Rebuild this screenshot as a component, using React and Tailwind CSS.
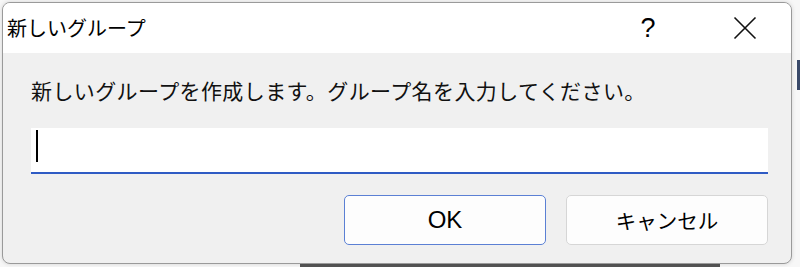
import React from "react";

const jp = { fontFamily: '"Noto Sans CJK JP", "Noto Sans", sans-serif' };
const latin = { fontFamily: '"Liberation Sans", "Noto Sans CJK JP", sans-serif' };

const App = () => {
  return (
    <div className="w-[800px] h-[267px] bg-[#f7f7f7] overflow-hidden relative" style={jp}>
      {/* background window bits peeking out */}
      <div className="absolute right-0 top-[60px] w-[3px] h-[30px] bg-[#3a4a6a]" />
      <div className="absolute left-[300px] bottom-0 w-[420px] h-[3px] bg-[#555]" />

      <div className="ml-[2px] mt-[2px] w-[790px] h-[262px] rounded-[8px] border border-[#9a9a9a] overflow-hidden flex flex-col bg-[#f0f0f0] relative shadow-[0_0_4px_rgba(0,0,0,0.15)]">
        {/* title bar */}
        <div className="h-[50px] bg-white flex items-center shrink-0">
          <span className="pl-[4px] text-[20px] leading-none text-black">新しいグループ</span>
          <div className="ml-auto flex items-center h-full">
            <span className="w-[40px] text-center text-[27px] leading-none text-black mr-[65px]" style={latin}>?</span>
            <svg width="24" height="24" viewBox="0 0 24 24" className="mr-[34px]">
              <path d="M1.5 1.5 L22.5 22.5 M22.5 1.5 L1.5 22.5" stroke="#111" strokeWidth="1.6" fill="none" />
            </svg>
          </div>
        </div>

        {/* body */}
        <div className="flex-1 flex flex-col pl-[28px] pr-[23px]">
          <p className="mt-[23px] text-[21px] leading-[28px] text-[#111] tracking-[0.4px]">
            新しいグループを作成します。グループ名を入力してください。
          </p>
          <div className="mt-[24px] h-[46px] w-[737px] bg-white border-b-2 border-[#2f5bc4] flex items-start pl-[5px] pt-[2px]">
            <div className="w-[2px] h-[32px] bg-black" />
          </div>
          <div className="mt-[21px] flex justify-end gap-[20px]">
            <button className="w-[202px] h-[50px] rounded-[5px] bg-[#fdfdfd] border border-[#5b80d4] text-[24px] text-black" style={latin}>
              OK
            </button>
            <button className="w-[202px] h-[50px] rounded-[5px] bg-[#fdfdfd] border border-[#d6d6d6] text-[20.5px] text-black">
              キャンセル
            </button>
          </div>
        </div>
      </div>
    </div>
  );
};

export default App;
